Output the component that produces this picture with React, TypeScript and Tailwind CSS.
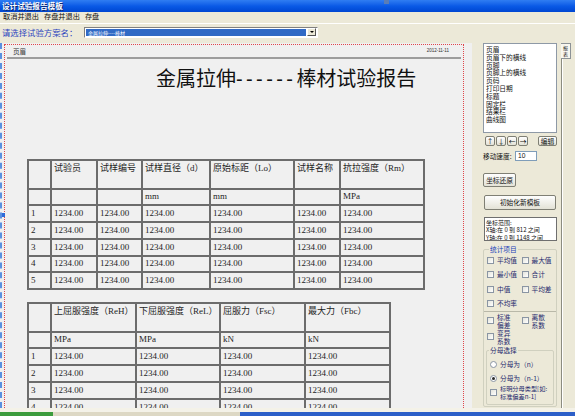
import React from "react";

// 表格列定义：宽度是两条竖线之间的距离
interface Column {
  title: string;
  unit: string;
  width: number;
}

const table1Columns: Column[] = [
  { title: "", unit: "", width: 23 },
  { title: "试验员", unit: "", width: 46 },
  { title: "试样编号", unit: "", width: 45 },
  { title: "试样直径（d）", unit: "mm", width: 68 },
  { title: "原始标距（Lo）", unit: "mm", width: 84 },
  { title: "试样名称", unit: "", width: 46 },
  { title: "抗拉强度（Rm）", unit: "MPa", width: 84 },
];

const table2Columns: Column[] = [
  { title: "", unit: "", width: 23 },
  { title: "上屈服强度（ReH）", unit: "MPa", width: 85 },
  { title: "下屈服强度（ReL）", unit: "MPa", width: 84 },
  { title: "屈服力（Fsc）", unit: "kN", width: 85 },
  { title: "最大力（Fbc）", unit: "kN", width: 85 },
];

const listItems = [
  "页眉",
  "页眉下的横线",
  "页脚",
  "页脚上的横线",
  "页码",
  "打印日期",
  "标题",
  "固定栏",
  "结果栏",
  "曲线图",
];

const cjk = "font-['Noto_Sans_CJK_SC',sans-serif]";
const tableFont = "font-['Liberation_Serif','Noto_Sans_CJK_SC',serif]";

function ReportTable({ columns, dataHeights }: { columns: Column[]; dataHeights: number[] }) {
  return (
    <div className={`inline-block border-l-2 border-t-2 border-[#6c6c6c] text-[9px] text-[#1e1e1e] ${tableFont}`}>
      <div className="flex h-[29px] border-b-2 border-[#6c6c6c]">
        {columns.map((c, i) => (
          <div
            key={i}
            className="shrink-0 border-r-2 border-[#6c6c6c] pl-[2px] pt-[2px] leading-[10px] whitespace-nowrap"
            style={{ width: c.width }}
          >
            {c.title}
          </div>
        ))}
      </div>
      <div className="flex h-[16px] border-b-2 border-[#6c6c6c]">
        {columns.map((c, i) => (
          <div
            key={i}
            className="shrink-0 border-r-2 border-[#6c6c6c] pl-[2px] flex items-center"
            style={{ width: c.width }}
          >
            {c.unit}
          </div>
        ))}
      </div>
      {dataHeights.map((h, r) => (
        <div key={r} className="flex border-b-2 border-[#6c6c6c]" style={{ height: h }}>
          {columns.map((c, i) => (
            <div
              key={i}
              className="shrink-0 border-r-2 border-[#6c6c6c] pl-[2px] flex items-center"
              style={{ width: c.width }}
            >
              {i === 0 ? r + 1 : "1234.00"}
            </div>
          ))}
        </div>
      ))}
    </div>
  );
}

function XpButton({ children, className = "" }: { children: React.ReactNode; className?: string }) {
  return (
    <div
      className={`flex items-center justify-center rounded-[2px] border border-[#7f7f74] bg-gradient-to-b from-[#fefefe] to-[#e3e2d6] text-[6.7px] text-[#111] ${className}`}
    >
      {children}
    </div>
  );
}

function Check({ checked = false }: { checked?: boolean }) {
  return (
    <span className="w-[7px] h-[7px] shrink-0 border border-[#8a95a3] bg-gradient-to-br from-[#e4e4dc] to-white flex items-center justify-center">
      {checked && <span className="w-[3px] h-[3px] bg-[#222]" />}
    </span>
  );
}

function Radio({ checked = false }: { checked?: boolean }) {
  return (
    <span className="w-[7px] h-[7px] shrink-0 rounded-full border border-[#8a95a3] bg-white flex items-center justify-center">
      {checked && <span className="w-[3px] h-[3px] rounded-full bg-[#2a2a2a]" />}
    </span>
  );
}

export default function App() {
  return (
    <div className={`w-[575px] h-[416px] bg-[#ece9d8] flex flex-col overflow-hidden ${cjk}`}>
      {/* 标题栏 */}
      <div className="relative h-[12px] shrink-0 bg-gradient-to-b from-[#2f7df2] via-[#0a5ae6] to-[#0046d2] flex items-center pl-[2px]">
        <span className="text-[7.6px] font-bold text-white leading-none [text-shadow:1px_1px_0_#0a246a]">设计试验报告模板</span>
        <span className="absolute left-[384px] top-0 w-[5px] h-[4px] bg-[#5a7db5]" />
      </div>

      {/* 菜单栏 */}
      <div className="h-[10px] shrink-0 flex items-center gap-[5px] pl-[3px] text-[7.2px] text-[#111] leading-none">
        <span>取消并退出</span>
        <span>存盘并退出</span>
        <span>存盘</span>
      </div>
      <div className="h-[2px] shrink-0 border-b border-white" />

      {/* 试验方案选择 */}
      <div className="h-[16px] shrink-0 flex items-center pl-[2px]">
        <span className="w-[82px] text-[8.4px] text-[#2c44be] leading-none">请选择试验方案名：</span>
        <div className="w-[234px] h-[11px] border border-t-[#808080] border-l-[#808080] border-b-white border-r-white bg-white flex items-center pl-[1px] pr-[1px]">
          <div className="flex-1 h-[7px] bg-[#316ac5] flex items-center pl-[2px] text-[5px] text-white leading-none">
            金属拉伸----棒材
          </div>
          <div className="w-[9px] h-[8px] ml-[1px] border border-t-white border-l-white border-b-[#555] border-r-[#555] bg-[#ece9d8] flex items-center justify-center">
            <span className="w-0 h-0 border-l-[2px] border-r-[2px] border-t-[2px] border-l-transparent border-r-transparent border-t-black" />
          </div>
        </div>
      </div>
      <div className="h-[3px] shrink-0" />

      {/* 主区域 */}
      <div className="flex-1 flex min-h-0">
        {/* 报表画布 */}
        <div className="relative w-[472px] h-full bg-[#f0f0f0] border-l-2 border-dashed border-[#5a8fe0] overflow-hidden">
          <div className="ml-[2px] mt-[1px] w-[460px] h-[400px] border-t border-l border-r border-dotted border-[#e0464a]">
            <div className="h-[12px] flex items-center justify-between pl-[8px] pr-[14px]">
              <span className="text-[6.5px] text-[#333] leading-none">页眉</span>
              <span className="text-[4.5px] text-[#333] leading-none font-['Liberation_Sans',sans-serif]">2012-11-11</span>
            </div>
            <div className="mx-[2px] h-[2px] bg-[#9d9d9d]" />
            <div className="mt-[9px] pl-[151px] text-[20px] leading-[20px] text-[#111] whitespace-nowrap">
              金属拉伸
              <span className="font-['Liberation_Sans',sans-serif] tracking-[3.4px]">------</span>
              棒材试验报告
            </div>
            <div className="mt-[70px] ml-[22px]">
              <ReportTable columns={table1Columns} dataHeights={[17, 17, 17, 16, 17]} />
            </div>
            <div className="mt-[12px] ml-[22px]">
              <ReportTable columns={table2Columns} dataHeights={[17, 17, 17, 17, 17]} />
            </div>
          </div>
          <span className="absolute left-[-2px] top-[170px] w-[5px] h-[4px] bg-[#2f6bd8]" />
        </div>

        {/* 右侧属性面板 */}
        <div className="flex-1 flex">
          <div className="ml-[11px] w-[74px] flex flex-col text-[6.7px] leading-none text-[#111]">
            <div className="h-[90px] shrink-0 bg-white border border-[#8e99a6] pl-[2px] pt-[2px] text-[6.7px] leading-[7.8px]">
              {listItems.map((item) => (
                <div key={item}>{item}</div>
              ))}
            </div>

            <div className="mt-[3px] h-[10px] shrink-0 flex">
              <XpButton className="w-[10px] ml-[2px]">↑</XpButton>
              <XpButton className="w-[10px] ml-[1px]">↓</XpButton>
              <XpButton className="w-[10px] ml-[1px]">←</XpButton>
              <XpButton className="w-[10px] ml-[1px]">→</XpButton>
              <XpButton className="w-[19px] ml-[10px]">编辑</XpButton>
            </div>

            <div className="mt-[5px] h-[10px] shrink-0 flex items-center">
              <span className="w-[32px]">移动速度:</span>
              <div className="w-[22px] h-[10px] bg-white border border-[#7f9db9] flex items-center pl-[2px] text-[6.7px] font-['Liberation_Sans',sans-serif]">
                10
              </div>
            </div>

            <XpButton className="mt-[12px] w-[33px] h-[14px] shrink-0">坐标还原</XpButton>
            <XpButton className="mt-[8px] ml-[1px] w-[72px] h-[15px] shrink-0">初始化新模板</XpButton>

            <div className="mt-[7px] ml-[1px] w-[73px] h-[24px] shrink-0 bg-white border border-[#6f6f6f] pl-[1px] pt-[1px] leading-[7.4px] text-[6px] whitespace-nowrap overflow-hidden">
              <div>坐标范围:</div>
              <div>X轴:在 0 到 812 之间</div>
              <div>Y轴:在 0 到 1148 之间</div>
            </div>

            {/* 统计项目 */}
            <div className="relative mt-[8px] h-[158px] shrink-0 border border-[#d0d0bf] rounded-[2px] text-[#1f2a6e]">
              <span className="absolute left-[5px] top-[-4px] px-[1px] bg-[#ece9d8] text-[#1a3fb8] text-[6.7px] leading-none">统计项目</span>
              <div className="grid grid-cols-2 gap-y-[7.3px] pl-[3px] pt-[7px]">
                <div className="flex items-center gap-[3px]"><Check /><span>平均值</span></div>
                <div className="flex items-center gap-[3px]"><Check /><span>最大值</span></div>
                <div className="flex items-center gap-[3px]"><Check /><span>最小值</span></div>
                <div className="flex items-center gap-[3px]"><Check /><span>合计</span></div>
                <div className="flex items-center gap-[3px]"><Check /><span>中值</span></div>
                <div className="flex items-center gap-[3px]"><Check /><span>平均差</span></div>
                <div className="flex items-center gap-[3px]"><Check /><span>不均率</span></div>
              </div>
              <div className="mt-[4px] border-t border-[#b9b8a8]" />
              <div className="grid grid-cols-2 pl-[3px] pt-[1px] leading-[8px]">
                <div className="flex items-center gap-[3px]"><Check /><span>标准<br />偏差</span></div>
                <div className="flex items-center gap-[3px]"><Check /><span>离散<br />系数</span></div>
                <div className="flex items-center gap-[3px]"><Check /><span>变异<br />系数</span></div>
              </div>
              <div className="relative mx-[2px] mt-[5px] h-[55px] border border-[#d0d0bf] rounded-[2px]">
                <span className="absolute left-[2px] top-[-4px] px-[1px] bg-[#ece9d8] text-[6.7px] leading-none">分母选择</span>
                <div className="pl-[3px] pt-[10px] flex flex-col">
                  <div className="flex items-center gap-[3px]"><Radio /><span>分母为（n）</span></div>
                  <div className="mt-[7px] flex items-center gap-[3px]"><Radio checked /><span>分母为（n-1）</span></div>
                  <div className="mt-[3px] flex items-center gap-[3px] leading-[8px]"><Check /><span className="text-[6.2px]">标明分母类型[如:<br />标准偏差n-1]</span></div>
                </div>
              </div>
            </div>
          </div>

          {/* 右侧竖排选项卡 */}
          <div className="ml-[4px] flex flex-col">
            <div className="w-[10px] h-[16px] bg-[#f7f6ee] border-t border-r border-b border-[#8c9296] flex flex-col items-center justify-center text-[5px] leading-[6px] text-[#222]">
              <span>报</span>
              <span>表</span>
            </div>
            <div className="flex-1 w-[2px] border-l border-[#8c8c80] bg-white" />
          </div>
        </div>
      </div>

      {/* 底部 */}
      <div className="h-[4px] shrink-0 bg-[#f4f2e8]" />
      <div className="h-[4px] shrink-0 flex">
        <div className="w-[53px] bg-[#3c9c3c]" />
        <div className="w-[187px] bg-[#ddd8c4]" />
        <div className="flex-1 bg-[#2c5fc8]" />
      </div>
    </div>
  );
}
